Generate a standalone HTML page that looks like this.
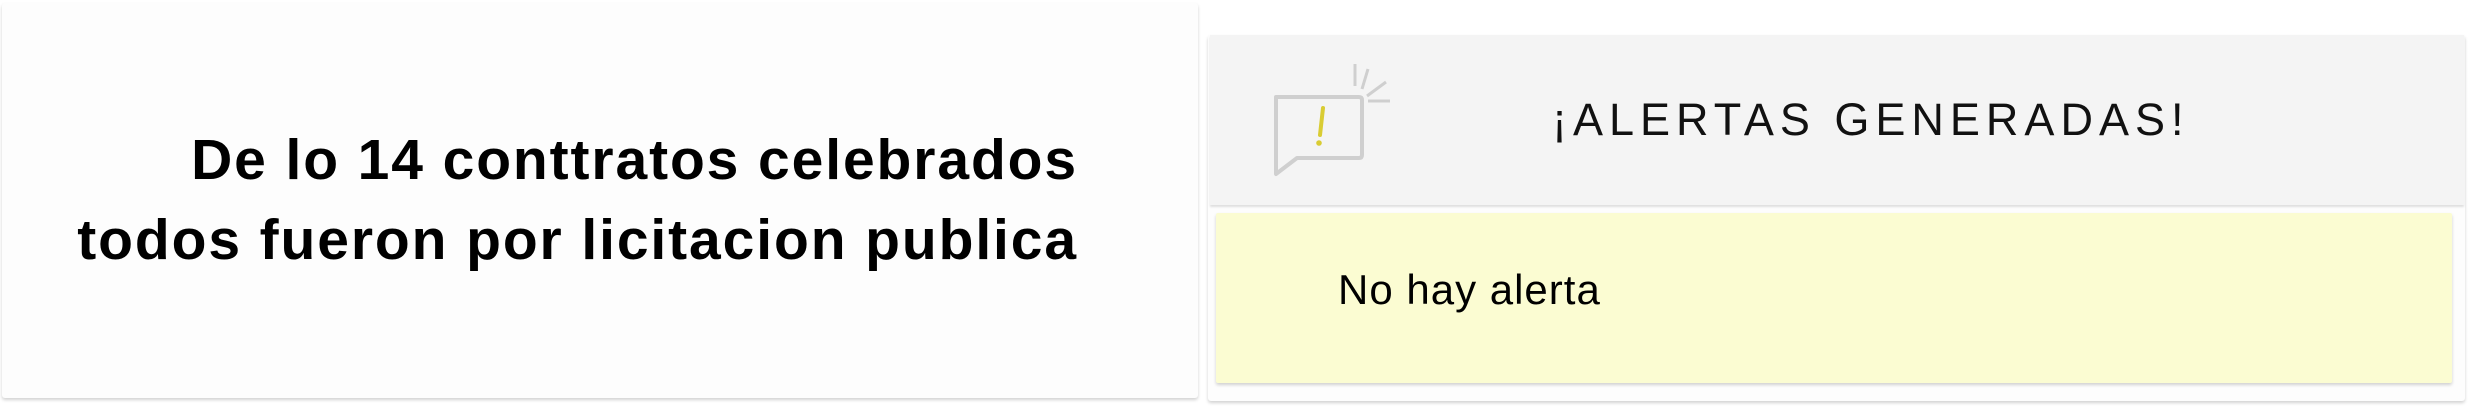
<!DOCTYPE html>
<html><head><meta charset="utf-8"><style>
body{margin:0;width:2470px;height:420px;background:#fff;position:relative;overflow:hidden;font-family:"Liberation Sans",sans-serif}
.l{position:absolute;left:2px;top:3px;width:1196px;height:395px;background:#fdfdfd;box-shadow:0 2px 3px rgba(0,0,0,.18);border-radius:3px}
.lt{position:absolute;right:1392px;top:120px;text-align:right;font-weight:bold;font-size:57px;letter-spacing:1.9px;line-height:80px;color:#000;white-space:nowrap}
.r{position:absolute;left:1208px;top:35px;width:1257px;height:366px;background:#fdfdfd;box-shadow:0 2px 3px rgba(0,0,0,.18);border-radius:3px}
.h{position:absolute;left:1210px;top:35px;width:1254px;height:170px;background:#f4f4f4;box-shadow:0 2px 2px rgba(0,0,0,.12)}
.t{position:absolute;left:1552px;top:94px;font-size:45px;letter-spacing:6px;color:#111;white-space:nowrap}
.y{position:absolute;left:1216px;top:213px;width:1236px;height:170px;background:#fbfcd2;box-shadow:0 2px 3px rgba(0,0,0,.18);border-radius:2px}
.n{position:absolute;left:1338px;top:266px;font-size:42px;letter-spacing:1px;color:#000;white-space:nowrap}
</style></head><body>
<div class="l"></div>
<div class="lt">De lo 14 conttratos celebrados<br>todos fueron por licitacion publica</div>
<div class="r"></div>
<div class="h"></div>
<svg style="position:absolute;left:1260px;top:55px" width="140" height="130" viewBox="1260 55 140 130">
<path d="M1276 97 H1359 Q1362 97 1362 100 V155 Q1362 158 1359 158 H1297 L1276 174 Z" fill="none" stroke="#cfcfcf" stroke-width="4" stroke-linejoin="round"/>
<line x1="1323" y1="108" x2="1320" y2="135" stroke="#d9cc33" stroke-width="4" stroke-linecap="round"/>
<circle cx="1319" cy="143" r="2.8" fill="#d9cc33"/>
<line x1="1355" y1="64" x2="1355" y2="86" stroke="#cfcfcf" stroke-width="3"/>
<line x1="1368" y1="69" x2="1362" y2="89" stroke="#cfcfcf" stroke-width="3"/>
<line x1="1386" y1="82" x2="1367" y2="96" stroke="#cfcfcf" stroke-width="3"/>
<line x1="1368" y1="101" x2="1390" y2="101" stroke="#cfcfcf" stroke-width="3"/>
</svg>
<div class="t">¡ALERTAS GENERADAS!</div>
<div class="y"></div>
<div class="n">No hay alerta</div>
</body></html>
